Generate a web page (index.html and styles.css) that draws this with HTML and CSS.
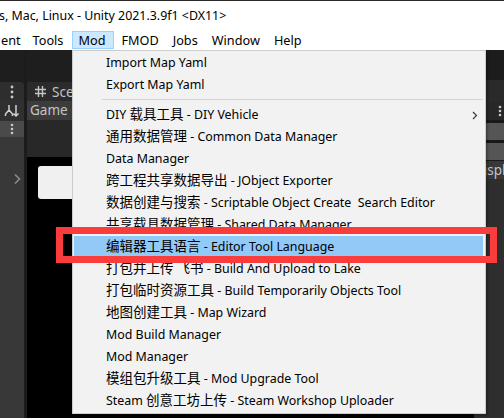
FILE: index.html
```html
<!DOCTYPE html>
<html>
<head>
<meta charset="utf-8">
<link rel="stylesheet" href="styles.css">
</head>
<body>
<div class="screen">
  <div class="titlebar"><span class="title">s, Mac, Linux - Unity 2021.3.9f1 &lt;DX11&gt;</span></div>
  <div class="menubar">
    <span class="mi mi-first">ent</span>
    <span class="mi mi-tools">Tools</span>
    <span class="mi active">Mod</span>
    <span class="mi">FMOD</span>
    <span class="mi">Jobs</span>
    <span class="mi">Window</span>
    <span class="mi">Help</span>
  </div>
  <div class="workspace">
    <div class="left-col">
      <div class="lc-top"></div>
      <div class="lc-tab"><svg width="4" height="14" viewBox="0 0 4 14"><circle cx="2" cy="2" r="1.4" fill="#c8c8c8"/><circle cx="2" cy="7" r="1.4" fill="#c8c8c8"/><circle cx="2" cy="12" r="1.4" fill="#c8c8c8"/></svg></div>
      <div class="lc-icon"><svg width="16" height="14" viewBox="0 0 16 14"><path d="M5 1v5M5 6L1.5 10M5 6l3.5 4M1.5 10v2M8.5 10v2M12 1v11M9.5 9.5L12 12l2.5-2.5" stroke="#d0d0d0" stroke-width="1.5" fill="none"/></svg></div>
      <div class="lc-dots"><svg width="4" height="12" viewBox="0 0 4 12"><circle cx="2" cy="2" r="1.3" fill="#c8c8c8"/><circle cx="2" cy="6" r="1.3" fill="#c8c8c8"/><circle cx="2" cy="10" r="1.3" fill="#c8c8c8"/></svg></div>
      <div class="lc-body"><svg class="chev" width="8" height="12" viewBox="0 0 8 12"><path d="M2 1.5l4.5 4.5L2 10.5" stroke="#8a8a8a" stroke-width="1.6" fill="none"/></svg></div>
    </div>
    <div class="splitter"></div>
    <div class="center">
      <div class="c-top"></div>
      <div class="c-tab"><svg class="hash" width="13" height="13" viewBox="0 0 13 13"><path d="M4.5 1v11M8.5 1v11M1 4.5h11M1 8.5h11" stroke="#c4c4c4" stroke-width="1.4" fill="none"/></svg><span>Scene</span></div>
      <div class="c-game">Game</div>
      <div class="c-bar"></div>
      <div class="c-view"><div class="c-box"></div></div>
    </div>
    <div class="right-col">
      <div class="r-top"></div>
      <div class="r-strip"></div>
      <div class="r-tab"><svg width="4" height="12" viewBox="0 0 4 12"><circle cx="2" cy="2" r="1.3" fill="#c8c8c8"/><circle cx="2" cy="6" r="1.3" fill="#c8c8c8"/><circle cx="2" cy="10" r="1.3" fill="#c8c8c8"/></svg></div>
      <div class="r-field"></div>
      <div class="r-field"></div>
      <div class="r-text">Displa</div>
      <div class="r-body"></div>
    </div>
  </div>

  <div class="dropdown">
    <div class="item">Import Map Yaml</div>
    <div class="item">Export Map Yaml</div>
    <div class="sep"></div>
    <div class="item has-sub">DIY <span class="zh">载具工具</span> - DIY Vehicle<svg class="sub" width="6" height="9" viewBox="0 0 6 9"><path d="M1 1l3.5 3.5L1 8" stroke="#333" stroke-width="1.1" fill="none"/></svg></div>
    <div class="item"><span class="zh">通用数据管理</span> - Common Data Manager</div>
    <div class="item">Data Manager</div>
    <div class="item"><span class="zh">跨工程共享数据导出</span> - JObject Exporter</div>
    <div class="item"><span class="zh">数据创建与搜索</span> - Scriptable Object Create&nbsp; Search Editor</div>
    <div class="item"><span class="zh">共享载具数据管理</span> - Shared Data Manager</div>
    <div class="item selected"><span class="zh">编辑器工具语言</span> - Editor Tool Language</div>
    <div class="item"><span class="zh">打包并上传 飞书</span> - Build And Upload to Lake</div>
    <div class="item"><span class="zh">打包临时资源工具</span> - Build Temporarily Objects Tool</div>
    <div class="item"><span class="zh">地图创建工具</span> - Map Wizard</div>
    <div class="item">Mod Build Manager</div>
    <div class="item">Mod Manager</div>
    <div class="item"><span class="zh">模组包升级工具</span> - Mod Upgrade Tool</div>
    <div class="item">Steam <span class="zh">创意工坊上传</span> - Steam Workshop Uploader</div>
  </div>
  <div class="callout"></div>
</div>
</body>
</html>
```

FILE: styles.css
```css
* { box-sizing: border-box; margin: 0; padding: 0; }
html, body { width: 504px; height: 418px; overflow: hidden; background: #2d2d2d; }
body { font-family: "Noto Sans", "Noto Sans CJK SC", sans-serif; font-size: 13px; color: #000; }
.screen { position: relative; width: 504px; height: 418px; overflow: hidden; }

.titlebar { height: 30px; background: #fff; border-top: 1px solid #2b2b2b; display: flex; align-items: center; }
.title { margin-left: -1px; font-size: 12.4px; color: #000; white-space: nowrap; }

.menubar { height: 20px; background: #fff; display: flex; align-items: center; white-space: nowrap; font-size: 12.7px; }
.mi { height: 18px; line-height: 17px; padding: 0 6px; border: 1px solid transparent; }
.mi-first { padding: 0 4px 0 0; }
.mi-tools { padding: 0 8px 0 6px; }
.mi.active { background: #cce8ff; border-color: #99d1ff; padding: 0 8px 0 5px; }

.workspace { height: 368px; display: flex; background: #191919; }
.left-col { width: 24px; display: flex; flex-direction: column; }
.lc-top { height: 32px; background: #1e1e1e; }
.lc-tab { height: 19px; background: #2e2e2e; border-radius: 0 3px 0 0; display: flex; align-items: center; justify-content: center; }
.lc-icon { height: 20px; background: #303030; display: flex; align-items: center; justify-content: center; }
.lc-dots { height: 16px; background: #4a4a4a; display: flex; align-items: center; justify-content: center; }
.lc-body { flex: 1; background: #383838; position: relative; }
.chev { position: absolute; left: 13px; top: 36px; }
.splitter { width: 3px; background: #1c1c1c; }

.center { flex: 1; display: flex; flex-direction: column; }
.c-top { height: 32px; background: #1e1e1e; }
.c-tab { height: 19px; background: #2b2b2b; color: #c4c4c4; display: flex; align-items: center; gap: 5px; padding-left: 7px; font-size: 13.5px; }
.c-game { height: 19px; background: #3c3c3c; color: #c4c4c4; padding-left: 3px; line-height: 19px; font-size: 13.5px; }
.c-bar { height: 37px; background: #282828; }
.c-view { flex: 1; background: #000; padding: 9px 0 0 11px; }
.c-box { width: 100px; height: 33px; background: #f0f0f0; border-radius: 3px; }

.right-col { width: 30px; display: flex; flex-direction: column; }
.r-top { height: 30px; background: #1c1c1c; }
.r-strip { height: 22px; background: #2a2a2a; }
.r-tab { height: 18px; background: #282828; display: flex; align-items: center; justify-content: flex-end; padding-right: 2px; }
.r-field { height: 17px; background: #555; margin-top: 3px; }
.r-text { height: 18px; background: #383838; color: #c4c4c4; line-height: 18px; margin-top: 1px; white-space: nowrap; overflow: hidden; text-align: right; font-size: 13.5px; }
.r-body { flex: 1; background: #2e2e2e; }

.dropdown { position: absolute; left: 72px; top: 50px; width: 414px; height: 364px; background: #f2f2f2; border: 1px solid #cccccc; padding: 1px 2px 1px 1px; box-shadow: 2px 2px 2px rgba(0,0,0,0.25); font-size: 12.4px; }
.item { height: 22px; line-height: 22px; padding-left: 32px; white-space: nowrap; position: relative; }
.zh { font-family: "Noto Sans CJK SC", sans-serif; font-size: 13.5px; line-height: 1; }
.item.selected { background: #91c9f7; }
.sub { position: absolute; left: 398px; top: 7px; }
.sep { height: 8px; position: relative; }
.sep::after { content: ""; position: absolute; left: 28px; right: 0; top: 3px; height: 1px; background: #d4d4d4; }

.callout { position: absolute; left: 56px; top: 227px; width: 441px; height: 36px; border: 7px solid #fa3c3c; }
```
